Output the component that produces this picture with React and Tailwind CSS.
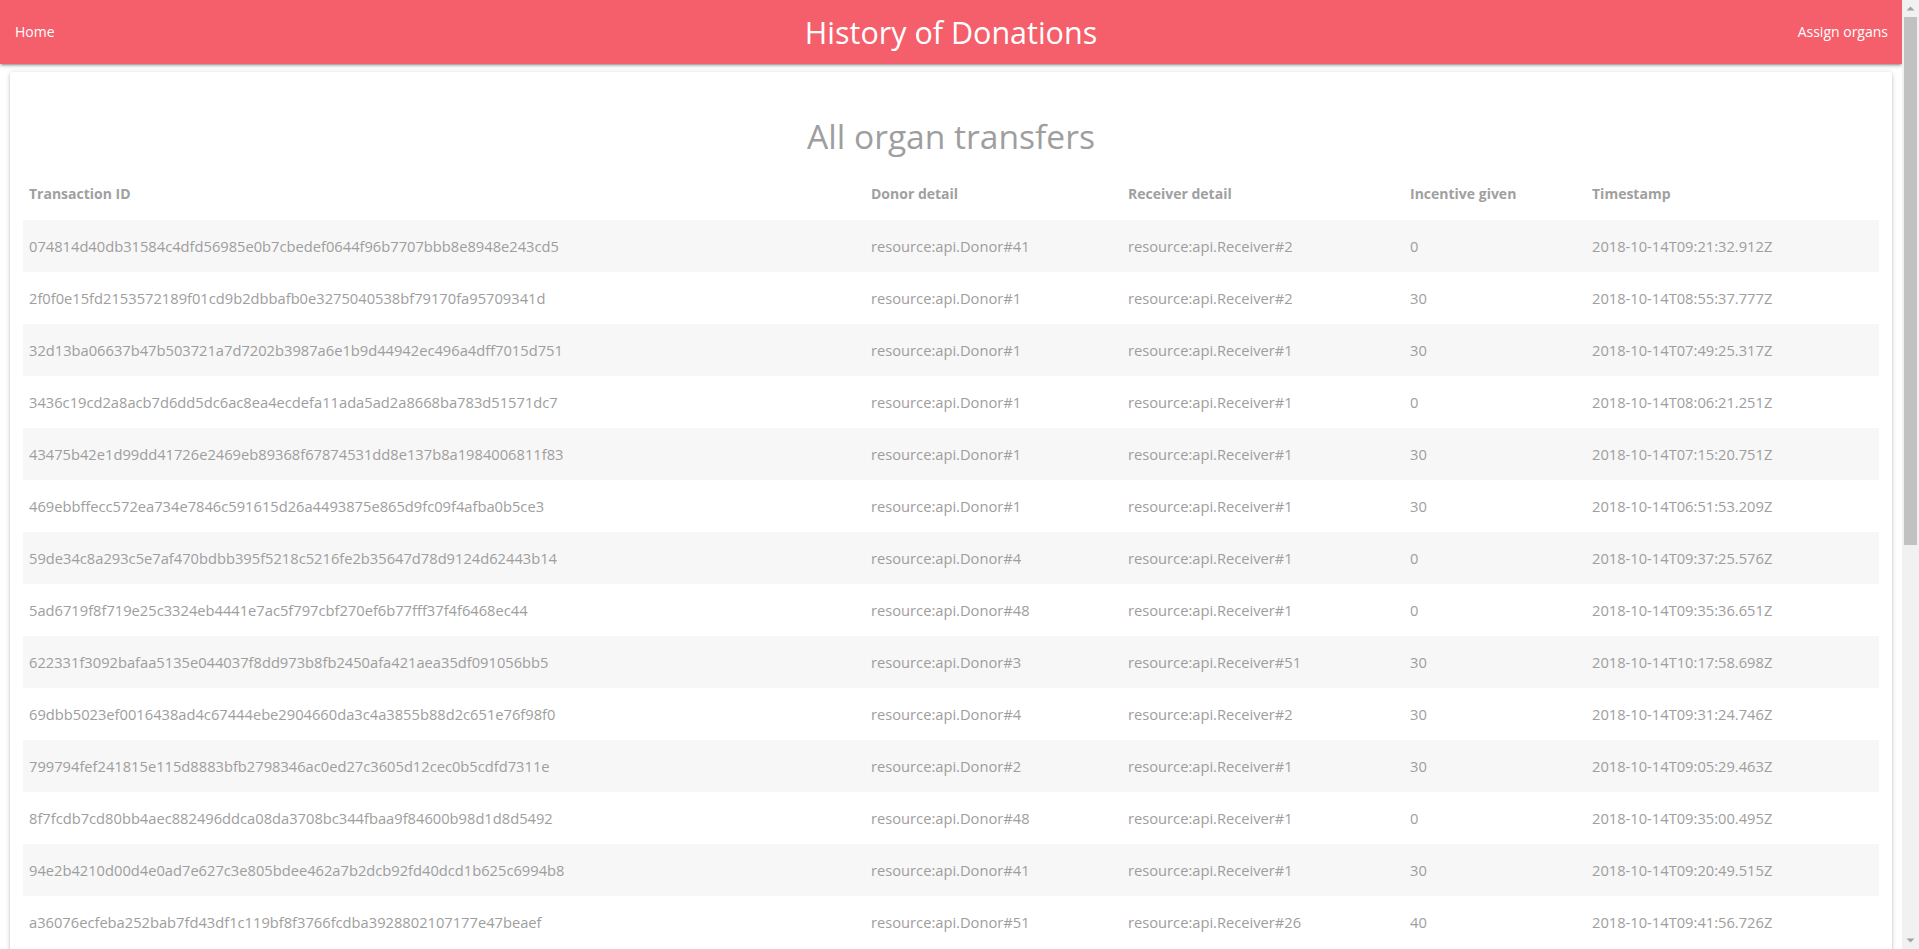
import React from "react";

const rows = [
  ["074814d40db31584c4dfd56985e0b7cbedef0644f96b7707bbb8e8948e243cd5", "resource:api.Donor#41", "resource:api.Receiver#2", "0", "2018-10-14T09:21:32.912Z"],
  ["2f0f0e15fd2153572189f01cd9b2dbbafb0e3275040538bf79170fa95709341d", "resource:api.Donor#1", "resource:api.Receiver#2", "30", "2018-10-14T08:55:37.777Z"],
  ["32d13ba06637b47b503721a7d7202b3987a6e1b9d44942ec496a4dff7015d751", "resource:api.Donor#1", "resource:api.Receiver#1", "30", "2018-10-14T07:49:25.317Z"],
  ["3436c19cd2a8acb7d6dd5dc6ac8ea4ecdefa11ada5ad2a8668ba783d51571dc7", "resource:api.Donor#1", "resource:api.Receiver#1", "0", "2018-10-14T08:06:21.251Z"],
  ["43475b42e1d99dd41726e2469eb89368f67874531dd8e137b8a1984006811f83", "resource:api.Donor#1", "resource:api.Receiver#1", "30", "2018-10-14T07:15:20.751Z"],
  ["469ebbffecc572ea734e7846c591615d26a4493875e865d9fc09f4afba0b5ce3", "resource:api.Donor#1", "resource:api.Receiver#1", "30", "2018-10-14T06:51:53.209Z"],
  ["59de34c8a293c5e7af470bdbb395f5218c5216fe2b35647d78d9124d62443b14", "resource:api.Donor#4", "resource:api.Receiver#1", "0", "2018-10-14T09:37:25.576Z"],
  ["5ad6719f8f719e25c3324eb4441e7ac5f797cbf270ef6b77fff37f4f6468ec44", "resource:api.Donor#48", "resource:api.Receiver#1", "0", "2018-10-14T09:35:36.651Z"],
  ["622331f3092bafaa5135e044037f8dd973b8fb2450afa421aea35df091056bb5", "resource:api.Donor#3", "resource:api.Receiver#51", "30", "2018-10-14T10:17:58.698Z"],
  ["69dbb5023ef0016438ad4c67444ebe2904660da3c4a3855b88d2c651e76f98f0", "resource:api.Donor#4", "resource:api.Receiver#2", "30", "2018-10-14T09:31:24.746Z"],
  ["799794fef241815e115d8883bfb2798346ac0ed27c3605d12cec0b5cdfd7311e", "resource:api.Donor#2", "resource:api.Receiver#1", "30", "2018-10-14T09:05:29.463Z"],
  ["8f7fcdb7cd80bb4aec882496ddca08da3708bc344fbaa9f84600b98d1d8d5492", "resource:api.Donor#48", "resource:api.Receiver#1", "0", "2018-10-14T09:35:00.495Z"],
  ["94e2b4210d00d4e0ad7e627c3e805bdee462a7b2dcb92fd40dcd1b625c6994b8", "resource:api.Donor#41", "resource:api.Receiver#1", "30", "2018-10-14T09:20:49.515Z"],
  ["a36076ecfeba252bab7fd43df1c119bf8f3766fcdba3928802107177e47beaef", "resource:api.Donor#51", "resource:api.Receiver#26", "40", "2018-10-14T09:41:56.726Z"],
];

const headers = ["Transaction ID", "Donor detail", "Receiver detail", "Incentive given", "Timestamp"];

function Scrollbar() {
  return (
    <div className="flex h-screen w-[17px] shrink-0 flex-col bg-[#f1f1f1]">
      <div className="flex h-[17px] items-center justify-center">
        <svg width="9" height="5" viewBox="0 0 9 5">
          <polygon points="0.5,4.5 8.5,4.5 4.5,0.5" fill="#a3a3a3" />
        </svg>
      </div>
      <div className="mx-[2px] h-[528px] bg-[#c1c1c1]" />
      <div className="flex-1" />
      <div className="flex h-[17px] items-center justify-center">
        <svg width="9" height="5" viewBox="0 0 9 5">
          <polygon points="0.5,0.5 8.5,0.5 4.5,4.5" fill="#a3a3a3" />
        </svg>
      </div>
    </div>
  );
}

export default function App() {
  return (
    <div className="flex h-screen overflow-hidden bg-white font-['Open_Sans',sans-serif] text-[#9e9e9e]">
      <div className="min-w-0 flex-1 overflow-hidden">
        <nav className="relative z-10 grid h-16 grid-cols-[1fr_auto_1fr] items-center bg-[#f45f6b] text-white shadow-[0_2px_2px_0_rgba(0,0,0,0.14),0_3px_1px_-2px_rgba(0,0,0,0.12),0_1px_5px_0_rgba(0,0,0,0.2)]">
          <a className="justify-self-start px-[15px] text-[14px] leading-[64px]">Home</a>
          <div className="text-[30.5px] leading-[64px]">History of Donations</div>
          <a className="justify-self-end pr-[14px] pl-[15px] text-[14px] leading-[64px]">Assign organs</a>
        </nav>

        <div className="mx-[10px] mt-[7.5px] mb-[15px] rounded-[2px] bg-white px-[13px] pt-[24px] pb-[24px] shadow-[0_2px_2px_0_rgba(0,0,0,0.14),0_3px_1px_-2px_rgba(0,0,0,0.12),0_1px_5px_0_rgba(0,0,0,0.2)]">
          <h4 className="mt-[22.8px] mb-[12px] text-center text-[33.6px] leading-[37.6px] font-normal text-[#9e9e9e]">
            All organ transfers
          </h4>
          <table className="w-full table-fixed border-collapse text-left">
            <colgroup>
              <col className="w-[842px]" />
              <col className="w-[257px]" />
              <col className="w-[282px]" />
              <col className="w-[182px]" />
              <col />
            </colgroup>
            <thead>
              <tr>
                {headers.map((h) => (
                  <th key={h} className="px-[6px] py-[15px] text-[14px] leading-[22px] font-bold text-[#a0a0a0]">
                    {h}
                  </th>
                ))}
              </tr>
            </thead>
            <tbody>
              {rows.map((r, i) => (
                <tr key={r[0]} className={i % 2 === 0 ? "bg-[#f7f7f7]" : "bg-white"}>
                  {r.map((c, j) => (
                    <td key={j} className="whitespace-nowrap px-[6px] py-[15px] text-[14.7px] leading-[22px] text-[#9e9e9e]">
                      {c}
                    </td>
                  ))}
                </tr>
              ))}
            </tbody>
          </table>
        </div>
      </div>
      <Scrollbar />
    </div>
  );
}
